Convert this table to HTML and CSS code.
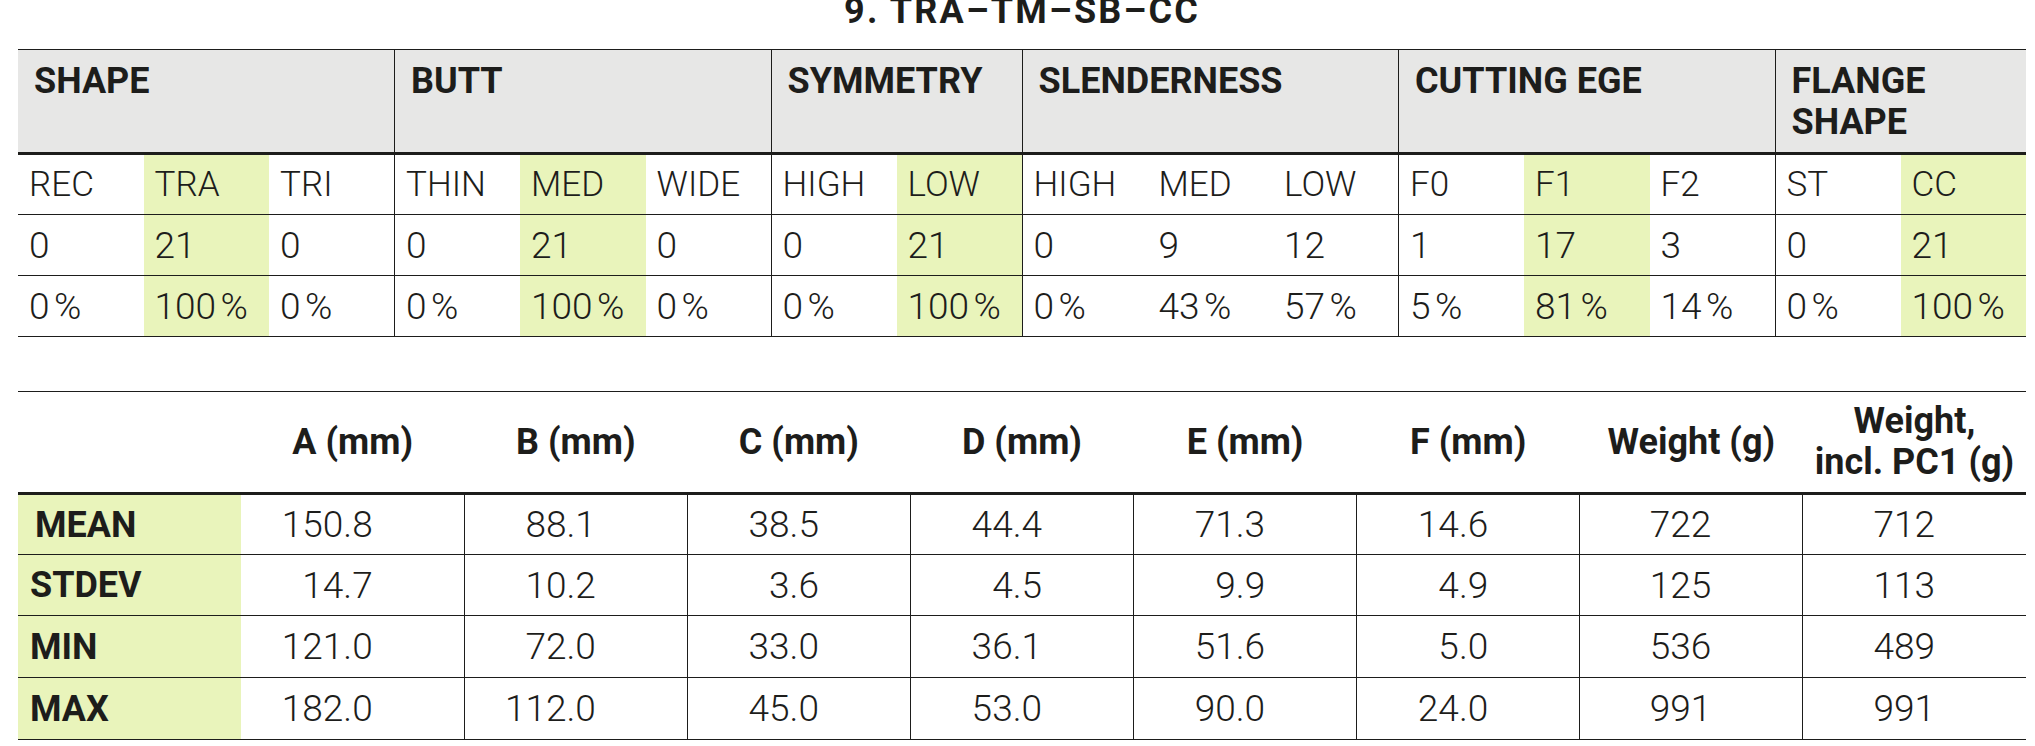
FILE: index.html
```html
<!DOCTYPE html>
<html lang="en">
<head>
<meta charset="utf-8">
<title>9. TRA–TM–SB–CC</title>
<link rel="stylesheet" href="styles.css">
</head>
<body>
<div class="page">
  <h1 class="title">9. TRA–TM–SB–CC</h1>

  <table class="cat">
    <colgroup><col span="16" class="sub"></colgroup>
    <thead>
      <tr class="head">
        <th colspan="3">SHAPE</th>
        <th colspan="3" class="grp">BUTT</th>
        <th colspan="2" class="grp">SYMMETRY</th>
        <th colspan="3" class="grp">SLENDERNESS</th>
        <th colspan="3" class="grp">CUTTING EGE</th>
        <th colspan="2" class="grp">FLANGE<br>SHAPE</th>
      </tr>
    </thead>
    <tbody>
      <tr>
        <td>REC</td><td class="hl">TRA</td><td>TRI</td>
        <td class="grp">THIN</td><td class="hl">MED</td><td>WIDE</td>
        <td class="grp">HIGH</td><td class="hl">LOW</td>
        <td class="grp">HIGH</td><td>MED</td><td>LOW</td>
        <td class="grp">F0</td><td class="hl">F1</td><td>F2</td>
        <td class="grp">ST</td><td class="hl">CC</td>
      </tr>
      <tr class="num">
        <td>0</td><td class="hl">21</td><td>0</td>
        <td class="grp">0</td><td class="hl">21</td><td>0</td>
        <td class="grp">0</td><td class="hl">21</td>
        <td class="grp">0</td><td>9</td><td>12</td>
        <td class="grp">1</td><td class="hl">17</td><td>3</td>
        <td class="grp">0</td><td class="hl">21</td>
      </tr>
      <tr class="num">
        <td>0&#8239;%</td><td class="hl">100&#8239;%</td><td>0&#8239;%</td>
        <td class="grp">0&#8239;%</td><td class="hl">100&#8239;%</td><td>0&#8239;%</td>
        <td class="grp">0&#8239;%</td><td class="hl">100&#8239;%</td>
        <td class="grp">0&#8239;%</td><td>43&#8239;%</td><td>57&#8239;%</td>
        <td class="grp">5&#8239;%</td><td class="hl">81&#8239;%</td><td>14&#8239;%</td>
        <td class="grp">0&#8239;%</td><td class="hl">100&#8239;%</td>
      </tr>
    </tbody>
  </table>

  <table class="stats">
    <colgroup><col span="9" class="scol"></colgroup>
    <thead>
      <tr class="head">
        <th></th>
        <th>A (mm)</th>
        <th>B (mm)</th>
        <th>C (mm)</th>
        <th>D (mm)</th>
        <th>E (mm)</th>
        <th>F (mm)</th>
        <th>Weight (g)</th>
        <th>Weight,<br>incl. PC1 (g)</th>
      </tr>
    </thead>
    <tbody>
      <tr>
        <th class="lbl indent">MEAN</th>
        <td>150.8</td><td>88.1</td><td>38.5</td><td>44.4</td><td>71.3</td><td>14.6</td><td>722</td><td>712</td>
      </tr>
      <tr>
        <th class="lbl">STDEV</th>
        <td>14.7</td><td>10.2</td><td>3.6</td><td>4.5</td><td>9.9</td><td>4.9</td><td>125</td><td>113</td>
      </tr>
      <tr class="tall">
        <th class="lbl">MIN</th>
        <td>121.0</td><td>72.0</td><td>33.0</td><td>36.1</td><td>51.6</td><td>5.0</td><td>536</td><td>489</td>
      </tr>
      <tr class="tall">
        <th class="lbl">MAX</th>
        <td>182.0</td><td>112.0</td><td>45.0</td><td>53.0</td><td>90.0</td><td>24.0</td><td>991</td><td>991</td>
      </tr>
    </tbody>
  </table>
</div>
</body>
</html>
```

FILE: styles.css
```css
html, body {
  margin: 0;
  padding: 0;
  background: #ffffff;
}

body {
  color: #1d1d1b;
  font-family: Roboto, "Liberation Sans", Arial, sans-serif;
}

.page {
  width: 2008px;
  padding-left: 18px;
}

.title {
  margin: 0 0 27px;
  height: 22px;
  font-size: 36px;
  line-height: 22px;
  font-weight: 700;
  letter-spacing: 2.2px;
  text-align: center;
}

table {
  width: 2008px;
  border-collapse: collapse;
  table-layout: fixed;
}

col.sub { width: 125.5px; }
col.scol { width: 223.1px; }

th, td {
  padding: 0;
  vertical-align: middle;
}

/* ---------- category table ---------- */
.cat {
  border-top: 1px solid #1d1d1b;
  border-bottom: 1px solid #1d1d1b;
}

.cat .head { height: 104px; }

.cat thead th {
  background: #e7e7e6;
  font-size: 36px;
  font-weight: 700;
  line-height: 41px;
  text-align: left;
  vertical-align: top;
  padding: 11px 10px 0 16px;
  border-bottom: 3px solid #1d1d1b;
}

.cat tbody tr { height: 61px; }

.cat tbody td {
  font-size: 35px;
  font-weight: 300;
  text-align: left;
  padding: 0 2px 0 11px;
  border-bottom: 1px solid #1d1d1b;
  white-space: nowrap;
}

.cat tbody .num td { font-size: 37px; }

.cat .grp { border-left: 1px solid #1d1d1b; }

.hl { background: #e9f4bb; }

/* ---------- statistics table ---------- */
.stats {
  margin-top: 54px;
  border-top: 1px solid #1d1d1b;
  border-bottom: 1px solid #1d1d1b;
}

.stats .head { height: 102px; }

.stats thead th {
  font-size: 36px;
  font-weight: 700;
  line-height: 41px;
  text-align: center;
  border-bottom: 3px solid #1d1d1b;
}

.stats tbody tr { height: 61px; }
.stats tbody tr.tall { height: 62px; }

.stats tbody td {
  font-size: 37px;
  font-weight: 300;
  text-align: right;
  padding-right: 91px;
  border-bottom: 1px solid #1d1d1b;
}

.stats tbody td + td { border-left: 1px solid #1d1d1b; }

.stats .lbl {
  background: #e9f4bb;
  font-size: 36px;
  font-weight: 700;
  text-align: left;
  padding-left: 12px;
  border-bottom: 1px solid #1d1d1b;
}

.stats .indent { padding-left: 17px; }
```
